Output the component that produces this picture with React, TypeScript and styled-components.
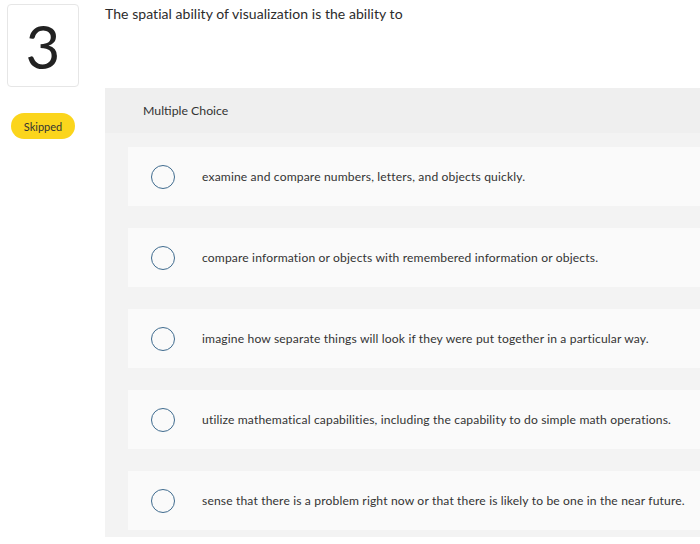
import React from "react";
import styled, { createGlobalStyle } from "styled-components";

const Global = createGlobalStyle`
  body {
    margin: 0;
    background: #ffffff;
    font-family: Lato, "Open Sans", sans-serif;
    color: #333333;
  }
`;

const Page = styled.div`
  display: flex;
  width: 700px;
  height: 544px;
  overflow: hidden;
`;

const Side = styled.div`
  width: 105px;
  flex-shrink: 0;
  display: flex;
  flex-direction: column;
  padding: 4px 0 0 7px;
  box-sizing: border-box;
`;

const NumBox = styled.div`
  width: 72px;
  height: 83px;
  box-sizing: border-box;
  border: 1px solid #e6e6e6;
  border-radius: 4px;
  display: flex;
  align-items: center;
  justify-content: center;
  font-size: 60px;
  font-weight: 400;
  line-height: 1;
  color: #222;
`;

const Pill = styled.div`
  margin: 26px 0 0 4px;
  width: 64px;
  height: 26px;
  border-radius: 13px;
  background: #fbd51c;
  font-size: 11px;
  display: flex;
  align-items: center;
  justify-content: center;
  color: #333;
`;

const Main = styled.div`
  flex: 1;
  display: flex;
  flex-direction: column;
`;

const Question = styled.div`
  font-size: 14px;
  letter-spacing: 0.05px;
  padding-top: 5px;
  height: 88px;
  box-sizing: border-box;
  color: #2b2b2b;
`;

const Panel = styled.div`
  background: #f3f3f3;
  padding-bottom: 7px;
`;

const PanelHead = styled.div`
  height: 45px;
  background: #efefef;
  display: flex;
  align-items: center;
  padding-left: 38px;
  font-size: 12.3px;
  color: #333;
`;

const Options = styled.div`
  display: flex;
  flex-direction: column;
  gap: 22px;
  padding: 14px 0 0 23px;
`;

const Option = styled.div`
  height: 59px;
  background: #fafafa;
  display: flex;
  align-items: center;
  padding-left: 23px;
  font-size: 12.1px;
  letter-spacing: 0.15px;
  color: #333;
`;

const Radio = styled.span`
  width: 22px;
  height: 22px;
  border: 1.5px solid #3f6b8e;
  border-radius: 50%;
  flex-shrink: 0;
  margin-right: 27px;
`;

const answers = [
  "examine and compare numbers, letters, and objects quickly.",
  "compare information or objects with remembered information or objects.",
  "imagine how separate things will look if they were put together in a particular way.",
  "utilize mathematical capabilities, including the capability to do simple math operations.",
  "sense that there is a problem right now or that there is likely to be one in the near future.",
];

export default function App() {
  return (
    <>
      <Global />
      <Page>
        <Side>
          <NumBox>3</NumBox>
          <Pill>Skipped</Pill>
        </Side>
        <Main>
          <Question>The spatial ability of visualization is the ability to</Question>
          <Panel>
            <PanelHead>Multiple Choice</PanelHead>
            <Options>
              {answers.map((a) => (
                <Option key={a}>
                  <Radio />
                  {a}
                </Option>
              ))}
            </Options>
          </Panel>
        </Main>
      </Page>
    </>
  );
}
